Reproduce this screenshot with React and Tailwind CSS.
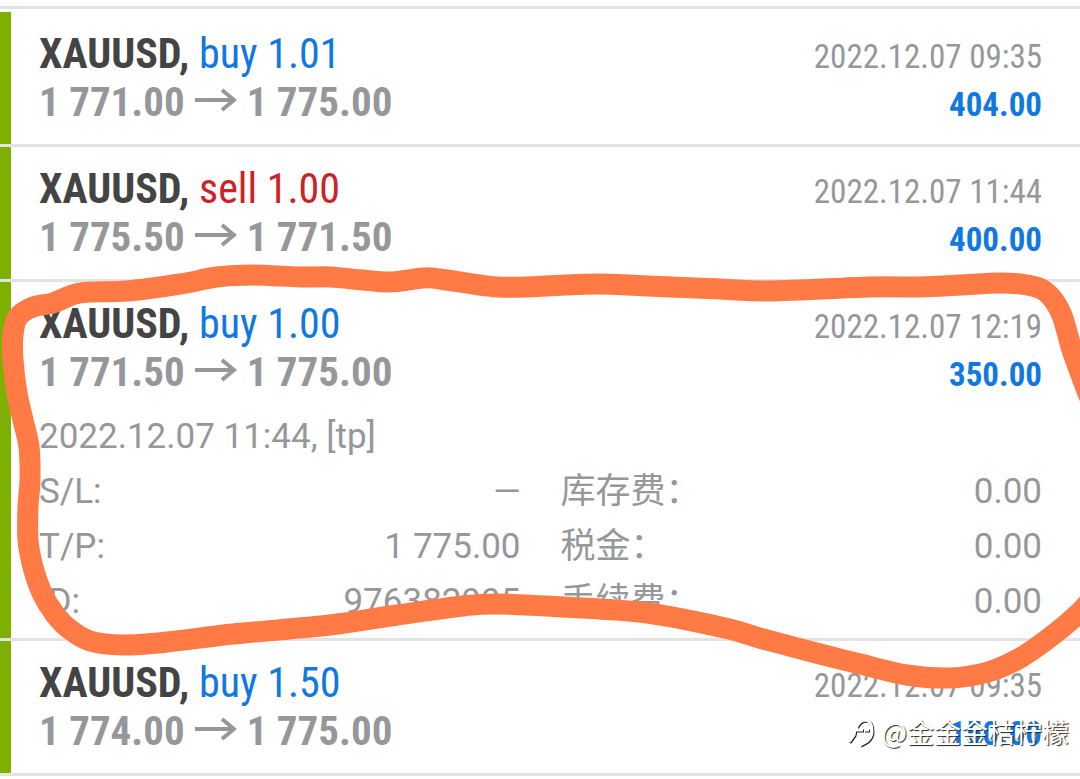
import React, { memo } from 'react';

const DEALS = [
  {
    key: 'd1',
    side: 'buy',
    volume: '1.01',
    open: '1 771.00',
    close: '1 775.00',
    time: '2022.12.07 09:35',
    profit: '404.00',
  },
  {
    key: 'd2',
    side: 'sell',
    volume: '1.00',
    open: '1 775.50',
    close: '1 771.50',
    time: '2022.12.07 11:44',
    profit: '400.00',
  },
  {
    key: 'd3',
    side: 'buy',
    volume: '1.00',
    open: '1 771.50',
    close: '1 775.00',
    time: '2022.12.07 12:19',
    profit: '350.00',
    details: {
      comment: '2022.12.07 11:44, [tp]',
      fields: [
        ['S/L:', '—'],
        ['库存费\uff1a', '0.00'],
        ['T/P:', '1 775.00'],
        ['税金\uff1a', '0.00'],
        ['ID:', '976382995'],
        ['手续费\uff1a', '0.00'],
      ],
    },
  },
  {
    key: 'd4',
    side: 'buy',
    volume: '1.50',
    open: '1 774.00',
    close: '1 775.00',
    time: '2022.12.07 09:35',
    profit: '150.00',
  },
];

// Centre line of the hand-drawn marker loop
const MARKER = [
  [1094, 408], [1084, 383], [1072, 350], [1061, 313], [1046, 292], [1027, 285], [1000, 283],
  [960, 285], [920, 287], [870, 287], [770, 291], [720, 289], [647, 286], [597, 284],
  [547, 286], [497, 287], [440, 279], [423, 278], [390, 282], [363, 280], [330, 277],
  [300, 277], [253, 275], [217, 277], [180, 284], [127, 291], [80, 293], [53, 303],
  [33, 307], [18, 317], [13, 335], [13, 360], [17, 393], [23, 420], [29, 447], [30, 480],
  [28, 507], [28, 540], [33, 567], [42, 593], [54, 613], [68, 628], [90, 641], [123, 645],
  [167, 642], [233, 634], [330, 625], [397, 615], [463, 606], [497, 604], [563, 607],
  [647, 613], [725, 628], [763, 639], [820, 654], [860, 664], [907, 675], [950, 678],
  [988, 672], [1020, 658], [1053, 635], [1080, 612], [1094, 596],
];

function smoothPath(points) {
  let d = `M${points[0][0]} ${points[0][1]}`;
  for (let i = 0; i < points.length - 1; i += 1) {
    const p0 = points[i - 1] || points[i];
    const p1 = points[i];
    const p2 = points[i + 1];
    const p3 = points[i + 2] || p2;
    d += `C${p1[0] + (p2[0] - p0[0]) / 6} ${p1[1] + (p2[1] - p0[1]) / 6}`;
    d += ` ${p2[0] - (p3[0] - p1[0]) / 6} ${p2[1] - (p3[1] - p1[1]) / 6}`;
    d += ` ${p2[0]} ${p2[1]}`;
  }
  return d;
}

function Arrow() {
  return (
    <svg width="42" height="30" viewBox="0 0 42 30" fill="none" aria-hidden="true">
      <path d="M0 13H39M27 3L39 13L27 23" stroke="currentColor" strokeWidth="4" />
    </svg>
  );
}

function DealDetails({ comment, fields }) {
  return (
    <div className="mt-[13px] -mb-[9px] font-['Roboto','Noto_Sans_CJK_SC',sans-serif] text-[35px] leading-[55px] text-[#96979b]">
      <p>{comment}</p>
      <dl className="grid grid-cols-2 gap-x-10">
        {fields.map(([label, value]) => (
          <div key={label} className="flex h-[55px] justify-between">
            <dt>{label}</dt>
            <dd>{value}</dd>
          </div>
        ))}
      </dl>
    </div>
  );
}

const Deal = memo(function Deal({ deal }) {
  return (
    <li className="border-b-[3px] border-[#e3e3e3]">
      <div className="border-l-[11px] border-[#7db000] py-[18px] pl-[28px] pr-[38px]">
        <div className="flex items-baseline justify-between">
          <div className="text-[42px] leading-[48px]">
            <span className="font-bold text-[#444444]">XAUUSD,</span>{' '}
            <span className={deal.side === 'buy' ? 'text-[#0f78e3]' : 'text-[#cc2226]'}>
              {deal.side} {deal.volume}
            </span>
          </div>
          <time className="text-[33px] leading-10 text-[#96979b]">{deal.time}</time>
        </div>
        <div className="flex items-baseline justify-between font-bold">
          <div className="flex items-center gap-[10px] text-[41px] leading-[48px] text-[#96979b]">
            <span>{deal.open}</span>
            <Arrow />
            <span>{deal.close}</span>
          </div>
          <span className="text-[33px] leading-10 text-[#0f78e3]">{deal.profit}</span>
        </div>
        {deal.details && <DealDetails {...deal.details} />}
      </div>
    </li>
  );
});

function Watermark() {
  return (
    <div className="absolute bottom-7 right-[11px] flex items-center gap-1.5 text-white">
      <svg width="28" height="32" viewBox="0 0 28 32" fill="none" className="drop-shadow-[1px_1px_0px_#222222]" aria-hidden="true">
        <path
          d="M2 26L7 19L8 14H16M9 13C11 6 15 4 19 4C24 5 25 10 25 15C25 22 21 26 13 29M17 14H22"
          stroke="currentColor"
          strokeWidth="3"
        />
      </svg>
      <span className="font-['Noto_Sans_CJK_SC',sans-serif] text-[27px] leading-8 [text-shadow:1px_1px_1px_#222222]">
        @金金金桔柠檬
      </span>
    </div>
  );
}

export default function App() {
  return (
    <main className="relative overflow-hidden bg-white pt-1.5 font-['Roboto_Condensed','Liberation_Sans_Narrow',sans-serif]">
      <ul className="border-t-[3px] border-[#e3e3e3] pt-[3px]">
        {DEALS.map((deal) => (
          <Deal key={deal.key} deal={deal} />
        ))}
      </ul>

      {/* Marker loop around the expanded deal */}
      <svg
        className="pointer-events-none absolute inset-0 h-full w-full"
        viewBox="0 0 1080 776"
        preserveAspectRatio="none"
        fill="none"
        aria-hidden="true"
      >
        <path d={smoothPath(MARKER)} stroke="#ff7a45" strokeWidth="21" strokeLinejoin="round" />
      </svg>

      <Watermark />
    </main>
  );
}
